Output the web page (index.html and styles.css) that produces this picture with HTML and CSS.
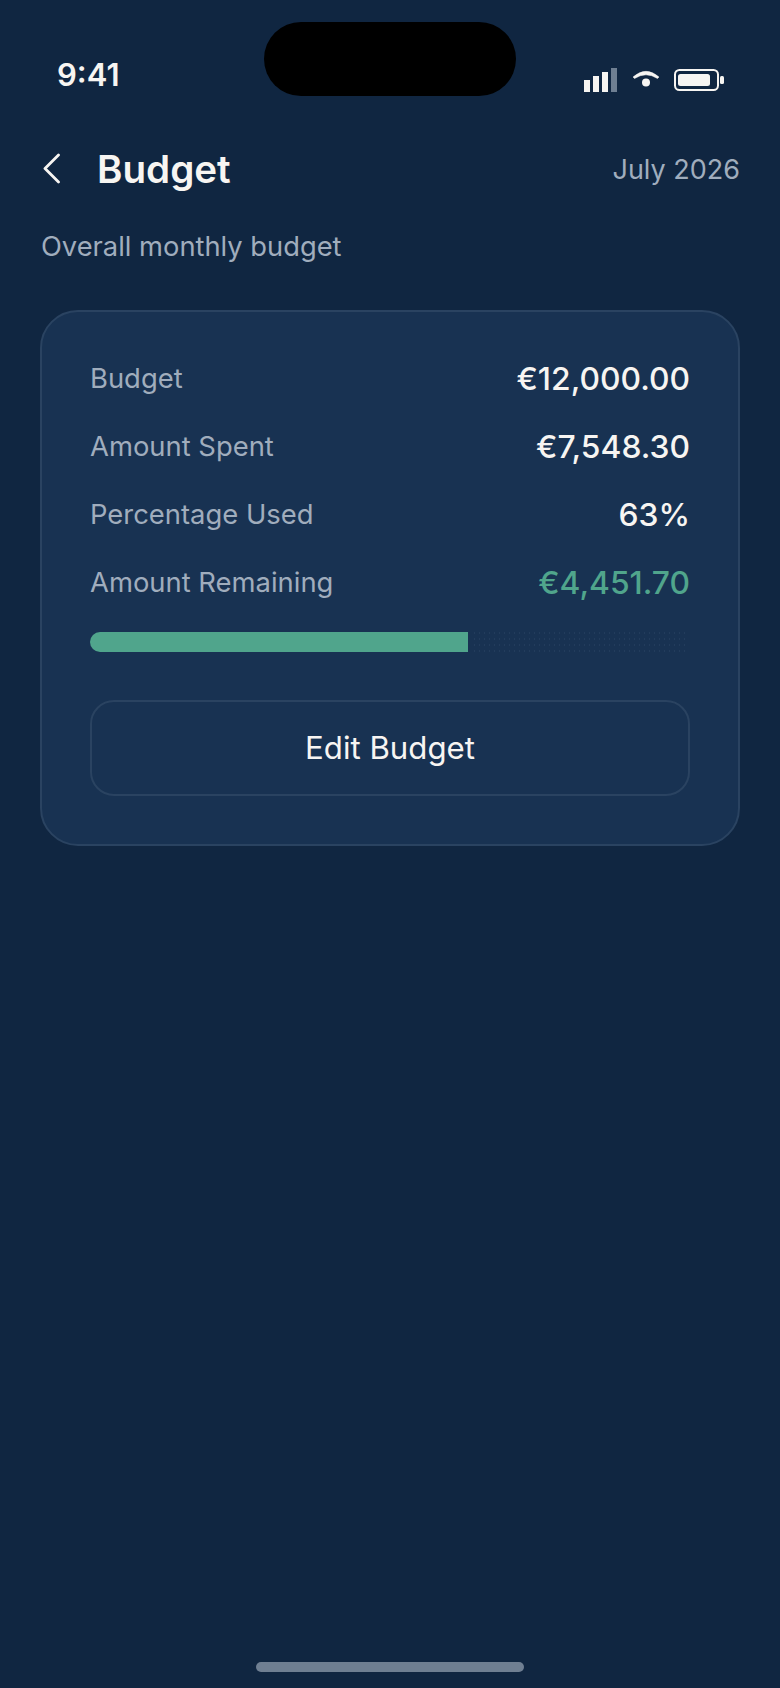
FILE: index.html
```html
<!DOCTYPE html>
<html lang="en">
<head>
  <meta charset="UTF-8" />
  <meta name="viewport" content="width=device-width, initial-scale=1.0"/>
  <title>Budget</title>
  <link rel="stylesheet" href="styles.css">
</head>
<body>
  <div class="screen">
    <div class="island"></div>

    <div class="status-bar">
      <span class="time">9:41</span>
      <svg class="status-icons" width="140" height="24" viewBox="0 0 140 24">
        <rect x="0" y="12" width="6" height="12" fill="#f7f5f2"/>
        <rect x="9" y="8" width="6" height="16" fill="#f7f5f2"/>
        <rect x="18" y="4" width="6" height="20" fill="#f7f5f2"/>
        <rect x="27" y="0" width="6" height="24" fill="#6f7f92"/>
        <path d="M49 9 Q62 -2.4 75 9 L73.5 10.5 Q62 3.1 50.5 10.5 Z" fill="#f7f5f2" stroke="#f7f5f2" stroke-width="0.5" stroke-linejoin="round"/>
        <circle cx="62" cy="14.5" r="4" fill="#f7f5f2"/>
        <rect x="91" y="2" width="43" height="20" rx="4.5" fill="none" stroke="#f7f5f2" stroke-width="2"/>
        <rect x="94" y="6" width="32" height="12" rx="2.5" fill="#f7f5f2"/>
        <rect x="136" y="8" width="4" height="8" rx="1.5" fill="#f7f5f2"/>
      </svg>
    </div>

    <header class="top-bar">
      <svg class="back-icon" width="18" height="32" viewBox="0 0 18 32">
        <path d="M16.5 2 L3 15.5 L16.5 29" fill="none" stroke="#f7f5f2" stroke-width="2.8" stroke-linecap="round" stroke-linejoin="round"/>
      </svg>
      <h1>Budget</h1>
      <span class="month">July 2026</span>
    </header>

    <p class="subtitle">Overall monthly budget</p>

    <section class="card">
      <div class="row">
        <span class="label">Budget</span>
        <span class="value">€12,000.00</span>
      </div>
      <div class="row">
        <span class="label">Amount Spent</span>
        <span class="value">€7,548.30</span>
      </div>
      <div class="row">
        <span class="label">Percentage Used</span>
        <span class="value">63%</span>
      </div>
      <div class="row">
        <span class="label">Amount Remaining</span>
        <span class="value green">€4,451.70</span>
      </div>

      <div class="progress">
        <div class="progress-fill" style="width: 63%"></div>
        <div class="progress-rest"></div>
      </div>

      <button class="edit-btn">Edit Budget</button>
    </section>

    <div class="home-bar"></div>
  </div>
</body>
</html>
```

FILE: styles.css
```css
body {
  margin: 0;
  background: #102641;
  font-family: 'Inter', sans-serif;
  color: #f7f5f2;
}

.screen {
  position: relative;
  width: 780px;
  height: 1688px;
  display: flex;
  flex-direction: column;
  overflow: hidden;
}

.island {
  position: absolute;
  top: 22px;
  left: 264px;
  width: 252px;
  height: 74px;
  border-radius: 37px;
  background: #000;
}

.status-bar {
  display: flex;
  justify-content: space-between;
  align-items: center;
  height: 36px;
  margin-top: 56px;
  padding: 0 56px 0 57px;
}

.time {
  font-size: 31px;
  font-weight: 600;
}

.status-icons {
  display: block;
  margin-top: 12px;
}

.top-bar {
  display: flex;
  align-items: center;
  height: 56px;
  margin-top: 49px;
  padding: 0 40px 0 42px;
}

.back-icon {
  flex-shrink: 0;
  margin-right: 37px;
}

h1 {
  margin: 0;
  font-size: 38.6px;
  font-weight: 600;
}

.month {
  margin-left: auto;
  font-size: 27px;
  font-weight: 400;
  color: #a0adbd;
}

.subtitle {
  margin: 33px 0 0;
  padding: 0 41px;
  font-size: 27.3px;
  line-height: 34px;
  color: #a0adbd;
}

.card {
  margin: 46px 40px 0;
  padding: 32px 48px 48px;
  background: #183252;
  border: 2px solid #2a4361;
  border-radius: 38px;
}

.row {
  display: flex;
  justify-content: space-between;
  align-items: center;
  height: 68px;
}

.label {
  font-size: 27.4px;
  color: #a0adbd;
}

.value {
  font-size: 31.8px;
  font-weight: 500;
}

.green {
  color: #50a58c;
}

.progress {
  display: flex;
  height: 20px;
  margin-top: 16px;
}

.progress-fill {
  height: 100%;
  background: #50a58c;
  border-radius: 10px 0 0 10px;
}

/* faint dotted track after the fill */
.progress-rest {
  flex: 1;
  margin: 0 5px 0 4px;
  background-image: radial-gradient(circle at center, #223c5c 0.6px, transparent 0.7px);
  background-size: 5px 6px;
  background-position: 0 4px;
}

.edit-btn {
  display: block;
  width: 100%;
  height: 96px;
  margin-top: 48px;
  background: transparent;
  border: 2px solid #2a4361;
  border-radius: 24px;
  color: #f7f5f2;
  font-family: inherit;
  font-size: 31.2px;
}

.home-bar {
  position: absolute;
  left: 256px;
  bottom: 16px;
  width: 268px;
  height: 10px;
  border-radius: 5px;
  background: #6f7f92;
}
```
